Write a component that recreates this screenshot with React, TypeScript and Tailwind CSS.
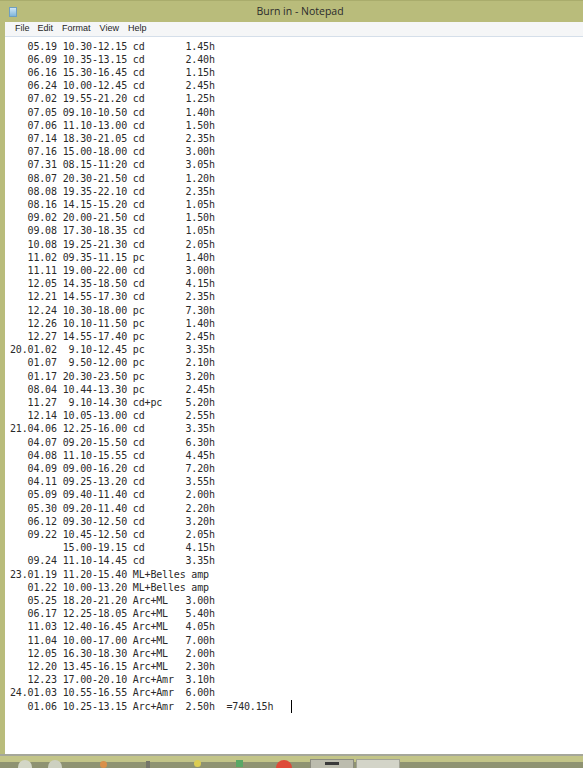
import React from 'react'

const lines = [
  '   05.19 10.30-12.15 cd       1.45h',
  '   06.09 10.35-13.15 cd       2.40h',
  '   06.16 15.30-16.45 cd       1.15h',
  '   06.24 10.00-12.45 cd       2.45h',
  '   07.02 19.55-21.20 cd       1.25h',
  '   07.05 09.10-10.50 cd       1.40h',
  '   07.06 11.10-13.00 cd       1.50h',
  '   07.14 18.30-21.05 cd       2.35h',
  '   07.16 15.00-18.00 cd       3.00h',
  '   07.31 08.15-11:20 cd       3.05h',
  '   08.07 20.30-21.50 cd       1.20h',
  '   08.08 19.35-22.10 cd       2.35h',
  '   08.16 14.15-15.20 cd       1.05h',
  '   09.02 20.00-21.50 cd       1.50h',
  '   09.08 17.30-18.35 cd       1.05h',
  '   10.08 19.25-21.30 cd       2.05h',
  '   11.02 09.35-11.15 pc       1.40h',
  '   11.11 19.00-22.00 cd       3.00h',
  '   12.05 14.35-18.50 cd       4.15h',
  '   12.21 14.55-17.30 cd       2.35h',
  '   12.24 10.30-18.00 pc       7.30h',
  '   12.26 10.10-11.50 pc       1.40h',
  '   12.27 14.55-17.40 pc       2.45h',
  '20.01.02  9.10-12.45 pc       3.35h',
  '   01.07  9.50-12.00 pc       2.10h',
  '   01.17 20.30-23.50 pc       3.20h',
  '   08.04 10.44-13.30 pc       2.45h',
  '   11.27  9.10-14.30 cd+pc    5.20h',
  '   12.14 10.05-13.00 cd       2.55h',
  '21.04.06 12.25-16.00 cd       3.35h',
  '   04.07 09.20-15.50 cd       6.30h',
  '   04.08 11.10-15.55 cd       4.45h',
  '   04.09 09.00-16.20 cd       7.20h',
  '   04.11 09.25-13.20 cd       3.55h',
  '   05.09 09.40-11.40 cd       2.00h',
  '   05.30 09.20-11.40 cd       2.20h',
  '   06.12 09.30-12.50 cd       3.20h',
  '   09.22 10.45-12.50 cd       2.05h',
  '         15.00-19.15 cd       4.15h',
  '   09.24 11.10-14.45 cd       3.35h',
  '23.01.19 11.20-15.40 ML+Belles amp',
  '   01.22 10.00-13.20 ML+Belles amp',
  '   05.25 18.20-21.20 Arc+ML   3.00h',
  '   06.17 12.25-18.05 Arc+ML   5.40h',
  '   11.03 12.40-16.45 Arc+ML   4.05h',
  '   11.04 10.00-17.00 Arc+ML   7.00h',
  '   12.05 16.30-18.30 Arc+ML   2.00h',
  '   12.20 13.45-16.15 Arc+ML   2.30h',
  '   12.23 17.00-20.10 Arc+Amr  3.10h',
  '24.01.03 10.55-16.55 Arc+Amr  6.00h',
]

const menu = [
  { label: 'File', cls: 'ml-[10px]' },
  { label: 'Edit', cls: 'ml-[8px]' },
  { label: 'Format', cls: 'ml-[9px]' },
  { label: 'View', cls: 'ml-[9px]' },
  { label: 'Help', cls: 'ml-[9px]' },
]

export default function App() {
  return (
    <div className="w-[583px] h-[768px] overflow-hidden flex flex-col bg-[#b9bc7b] font-['Liberation_Sans',sans-serif]">
      {/* title bar */}
      <div className="h-[22px] shrink-0 flex items-center border-t border-[#a9ac6c]">
        <div className="ml-[9px] w-[8px] h-[10px] bg-gradient-to-b from-[#cfe6f5] to-[#7fb6dc] border border-[#6f9fc0] shrink-0" />
        <div className="w-[566px] shrink-0 text-center text-[10.5px] text-[#2b2b2b] font-['Open_Sans',sans-serif]">
          Burn in - Notepad
        </div>
      </div>

      {/* window body */}
      <div className="flex-1 flex flex-col pl-[5px] min-h-0">
        <div className="h-[15px] shrink-0 flex items-center bg-[#f5f6f7] text-[9px] text-[#1e1e1e] border-b border-[#d5dfea]">
          {menu.map((m) => (
            <span key={m.label} className={m.cls}>
              {m.label}
            </span>
          ))}
        </div>
        <div className="flex-1 bg-white pt-[2.5px] pl-[5px] text-[10px] leading-[13.2px] tracking-[-0.17px] text-[#2a2a2a] font-['DejaVu_Sans_Mono',monospace]">
          {lines.map((l, i) => (
            <div key={i} className="whitespace-pre">
              {l}
            </div>
          ))}
          <div className="whitespace-pre flex items-center">
            <span>{'   01.06 10.25-13.15 Arc+Amr  2.50h  =740.15h   '}</span>
            <span className="inline-block w-px h-[13px] bg-black" />
          </div>
        </div>
      </div>

      {/* taskbar */}
      <div className="h-[14px] shrink-0 flex flex-col">
        <div className="h-[2px] bg-[#a5a79a]" />
        <div className="h-[6px] bg-[#c3c588] relative">
          <div className="absolute left-[18px] top-[4px] w-[14px] h-[14px] rounded-full bg-[#d3d6c6]" />
          <div className="absolute left-[48px] top-[4px] w-[14px] h-[14px] rounded-full bg-[#cdd0c0]" />
          <div className="absolute left-[100px] top-[5px] w-[7px] h-[7px] rounded-full bg-[#d9904a]" />
          <div className="absolute left-[146px] top-[5px] w-[4px] h-[8px] bg-[#75766a]" />
          <div className="absolute left-[194px] top-[4px] w-[7px] h-[7px] rounded-full bg-[#dccd52]" />
          <div className="absolute left-[236px] top-[4px] w-[7px] h-[7px] bg-[#5aa866]" />
          <div className="absolute left-[276px] top-[4px] w-[16px] h-[16px] rounded-full bg-[#de4a38]" />
          <div className="absolute left-[310px] top-[3px] w-[44px] h-[12px] bg-[#bcbcae] border border-[#8b8b7f]">
            <div className="mx-auto mt-[2px] w-[14px] h-[3px] bg-[#3a3a3a]" />
          </div>
          <div className="absolute left-[356px] top-[3px] w-[44px] h-[12px] bg-[#d3d4c8] border border-[#a2a395]" />
        </div>
        <div className="flex-1 bg-[#8f9372]" />
      </div>
    </div>
  )
}
